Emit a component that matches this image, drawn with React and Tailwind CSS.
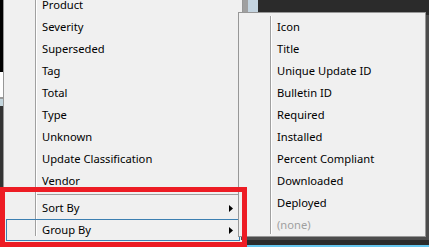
const mainItems = [
  "Product",
  "Severity",
  "Superseded",
  "Tag",
  "Total",
  "Type",
  "Unknown",
  "Update Classification",
  "Vendor",
];

const columnItems = [
  "Icon",
  "Title",
  "Unique Update ID",
  "Bulletin ID",
  "Required",
  "Installed",
  "Percent Compliant",
  "Downloaded",
  "Deployed",
];

function Arrow() {
  return (
    <svg width="4" height="7" viewBox="0 0 4 7" className="mr-[5px]">
      <path d="M0 0 L4 3.5 L0 7 Z" fill="#000" />
    </svg>
  );
}

function MenuRow({ label, disabled, submenu, focused }) {
  return (
    <div
      className={
        focused
          ? "relative mx-[2px] flex h-[22px] items-center border border-[#3c7fb1] pl-[35px] pr-[1px]"
          : "relative flex h-[22px] items-center pl-[38px] pr-1"
      }
    >
      <span className={"flex-1 " + (disabled ? "text-[#a0a0a0]" : "text-black")}>
        {label}
      </span>
      {submenu && <Arrow />}
    </div>
  );
}

export default function App() {
  return (
    <div
      className="relative h-[247px] w-[429px] overflow-hidden bg-[#2b2b2b] text-[11.2px] leading-none"
      style={{ fontFamily: '"Noto Sans", "Segoe UI", sans-serif' }}
    >
      {/* underlying window bits */}
      <div className="absolute left-0 top-0 flex h-[187px] w-[3px] flex-col">
        <div className="h-[72px] bg-black" />
        <div className="h-[25px] bg-white" />
        <div className="h-[2px] bg-[#9a9a9a]" />
        <div className="h-[7px] bg-[#c3d5dd]" />
        <div className="flex-1 bg-[#333]" />
      </div>
      <div className="absolute left-[243px] top-0 flex h-[12px]">
        <div className="w-[5px] bg-[#a0a0a0]" />
        <div className="w-[10px] bg-[#c4d4e0]" />
      </div>
      <div className="absolute bottom-0 left-0 h-[2px] w-full bg-[#66c6ee]" />

      {/* main context menu */}
      <div className="absolute left-[3px] top-[-8px] h-[251px] w-[240px] border border-[#979797] bg-[#f0f0f0] pt-[1px]">
        <div className="absolute bottom-[6px] left-[31px] top-0 w-px bg-[#a0a0a0]" />
        <div className="absolute bottom-[6px] left-[32px] top-0 w-px bg-white" />
        {mainItems.map((label) => (
          <MenuRow key={label} label={label} />
        ))}
        <div className="flex h-[5px] items-center pl-[32px]">
          <div className="h-px flex-1 bg-[#a0a0a0]" />
        </div>
        <MenuRow label="Sort By" submenu />
        <MenuRow label="Group By" submenu focused />
      </div>

      {/* columns submenu */}
      <div className="absolute left-[238px] top-[12px] h-[225px] w-[188px] border border-[#979797] bg-[#f0f0f0] pt-[3px] shadow-[3px_3px_0_#4c4c4c]">
        <div className="absolute bottom-[2px] left-[31px] top-[3px] w-px bg-[#a0a0a0]" />
        <div className="absolute bottom-[2px] left-[32px] top-[3px] w-px bg-white" />
        {columnItems.map((label) => (
          <MenuRow key={label} label={label} />
        ))}
        <MenuRow label="(none)" disabled />
      </div>

      {/* annotation */}
      <div className="absolute left-0 top-[187px] h-[60px] w-[247px] border-[5px] border-[#ed1c24]" />
    </div>
  );
}
